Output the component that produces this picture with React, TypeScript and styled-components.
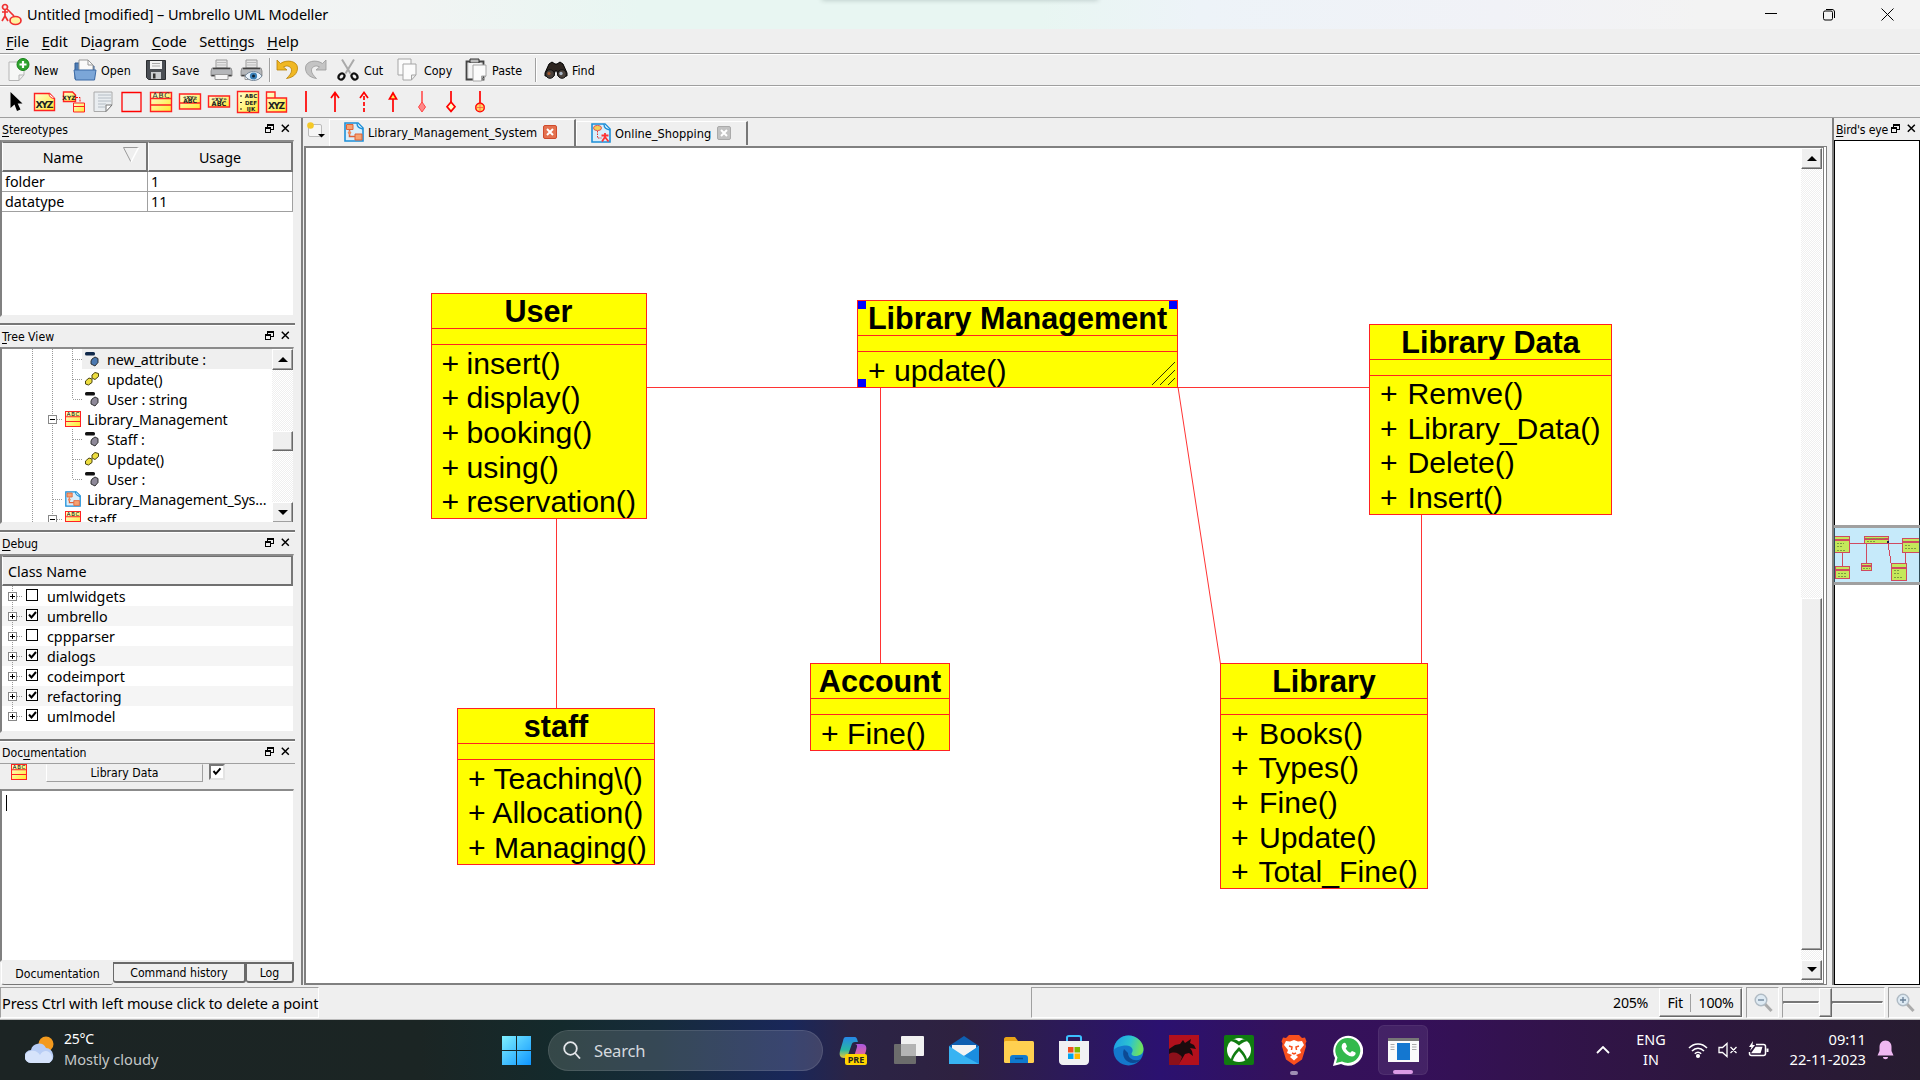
import React from "react";
import styled, { createGlobalStyle, css } from "styled-components";

const ui = `"Noto Sans", "Open Sans", sans-serif`;
const small = `"DejaVu Sans Condensed", "Noto Sans", sans-serif`;

const Global = createGlobalStyle`
  * { box-sizing: border-box; }
  html, body { margin: 0; padding: 0; overflow: hidden; background: #efefef; }
  svg { display: block; flex: none; }
  u { text-decoration: underline; text-underline-offset: 2px; text-decoration-thickness: 1px; }
`;

const Screen = styled.div`
  width: 1920px;
  height: 1080px;
  display: flex;
  flex-direction: column;
  background: #efefef;
  color: #000;
  font-family: ${ui};
  font-size: 14.3px;
  white-space: nowrap;
  overflow: hidden;
`;

/* ---------- title, menu, toolbars ---------- */

const TitleBar = styled.header`
  height: 29px;
  flex: none;
  display: flex;
  align-items: center;
  padding-left: 1px;
  background: linear-gradient(90deg, #f3f3f3 0, #f1f4f3 420px, #e8f6f2 640px, #e8f6f2 1040px, #edf3f8 1200px, #f1f2f7 1500px, #f3f3f3 1700px);
  position: relative;
`;
const TitleShade = styled.div`
  position: absolute;
  left: 822px;
  top: -4px;
  width: 276px;
  height: 4px;
  box-shadow: 0 0 5px rgba(0, 40, 30, 0.25);
`;
const TitleText = styled.span`
  margin: 0 0 1px 4px;
  font-size: 14.5px;
  letter-spacing: -0.12px;
  flex: 1;
`;
const WindowButtons = styled.div`
  display: flex;
  gap: 45px;
  align-items: center;
  padding-right: 26px;
`;
const MenuBar = styled.nav`
  height: 24px;
  flex: none;
  display: flex;
  align-items: center;
  gap: 12.5px;
  padding-left: 6px;
  font-size: 14.7px;
  letter-spacing: -0.08px;
`;
const Bar = styled.div`
  height: 32px;
  flex: none;
  display: flex;
  align-items: center;
  border-top: 1px solid #9f9f9f;
  box-shadow: inset 0 1px #fff;
  padding-top: 1px;
`;
const MainBar = styled(Bar)`
  padding-left: 6px;
`;
const Tool = styled.div<{ $w: number }>`
  width: ${(p) => p.$w}px;
  flex: none;
  display: flex;
  align-items: center;
  gap: 4px;
  font: 12.4px ${small};
`;
const ToolSep = styled.i<{ $r: number }>`
  width: 2px;
  height: 24px;
  margin-right: ${(p) => p.$r}px;
  background: #a0a0a0;
  border-right: 1px solid #fff;
`;
const ToolIcons = styled.div`
  display: flex;
  gap: 5px;
  padding: 0 0 1px 4px;
`;

/* ---------- docks ---------- */

const Body = styled.div`
  height: 868px;
  flex: none;
  display: flex;
  border-top: 1px solid #9f9f9f;
`;
const Left = styled.div`
  width: 295px;
  flex: none;
  display: flex;
  flex-direction: column;
`;
const Dock = styled.section<{ $h: number; $line?: boolean }>`
  height: ${(p) => p.$h}px;
  flex: none;
  display: flex;
  flex-direction: column;
  ${(p) => p.$line && css`border-top: 2px solid #777; box-shadow: inset 0 1px #fff;`}
`;
const DockTitle = styled.div`
  height: 22px;
  flex: none;
  display: flex;
  align-items: center;
  padding: 2px 5px 0 2px;
  gap: 7px;
  font: 12.2px ${small};
  span { flex: 1; }
  svg { margin-top: -3px; }
`;
const NarrowTitle = styled(DockTitle)`
  padding-right: 4px;
  span { flex: 0 0 52px; overflow: hidden; margin-right: -4px; letter-spacing: -0.2px; }
`;
const Frame = styled.div<{ $h: number }>`
  height: ${(p) => p.$h}px;
  width: 294px;
  flex: none;
  display: flex;
  flex-direction: column;
  background: #fff;
  border: 2px solid;
  border-color: #8b8b8b #efefef #efefef #808080;
  border-right-width: 1px;
  overflow: hidden;
  position: relative;
`;
const HeadCell = styled.div<{ $left?: boolean }>`
  flex: 1;
  height: 30px;
  display: flex;
  align-items: center;
  justify-content: ${(p) => (p.$left ? "flex-start" : "center")};
  padding-top: 1px;
  padding-left: ${(p) => (p.$left ? 5 : 0)}px;
  background: #efefef;
  border: 1px solid;
  border-color: #707070 #777 #707070 #fff;
  border-bottom-width: 2px;
  border-right-width: 2px;
`;
const SortHead = styled(HeadCell)`
  flex: 0 0 146px;
  justify-content: flex-end;
  gap: 40px;
  padding-right: 7px;
  svg { margin-top: -5px; }
`;
const Row = styled.div`
  display: flex;
`;
const Cell = styled.div`
  flex: 1;
  height: 20px;
  line-height: 19px;
  padding-left: 3px;
  border: solid #a0a0a0;
  border-width: 0 1px 1px 0;
  &:last-child { flex: 0 0 145px; }
`;
const TreeBody = styled.div`
  display: flex;
  flex: 1;
`;
const TreeRows = styled.div`
  flex: 1;
  overflow: hidden;
`;
const TreeRow = styled.div<{ $sel?: boolean; $deep?: boolean }>`
  height: 20px;
  display: flex;
  align-items: center;
  letter-spacing: ${(p) => (p.$deep ? -0.1 : -0.15)}px;
  > div {
    display: flex;
    align-items: center;
    height: 20px;
    flex: 1;
    background: ${(p) => (p.$sel ? "#efefef" : "none")};
    gap: ${(p) => (p.$deep ? 7 : 6)}px;
    padding-left: ${(p) => (p.$deep ? 2 : 1)}px;
  }
`;
const DebugRow = styled.div<{ $alt?: boolean }>`
  height: 20px;
  display: flex;
  align-items: center;
  gap: 9px;
  background: ${(p) => (p.$alt ? "#f5f5f5" : "#fff")};
`;
const Scroll = styled.div`
  width: 21px;
  flex: none;
  display: flex;
  flex-direction: column;
  background: repeating-conic-gradient(#fff 0 25%, #efefef 0 50%) 0 0 / 2px 2px;
`;
const ScrollPart = styled.div<{ $h: number; $mt?: number }>`
  height: ${(p) => p.$h}px;
  flex: none;
  margin-top: ${(p) => p.$mt || 0}px;
  display: grid;
  place-items: center;
  background: #efefef;
  border: 1px solid;
  border-color: #fff #696969 #696969 #fff;
  box-shadow: inset -1px -1px #a0a0a0;
`;
const DocHead = styled.div`
  height: 26px;
  flex: none;
  display: flex;
  align-items: flex-start;
  border-top: 1px solid #a0a0a0;
  padding-left: 11px;
`;
const DocName = styled.div`
  width: 157px;
  height: 18px;
  margin: 0 6px 0 19px;
  text-align: center;
  font: 12.2px/17px ${small};
  border: 1px solid;
  border-color: #efefef #a0a0a0 #a0a0a0 #fff;
`;
const DocCheck = styled.div`
  width: 16px;
  height: 16px;
  background: #fff;
  border: 2px solid;
  border-color: #777 #e3e3e3 #e3e3e3 #777;
`;
const Caret = styled.i`
  width: 1px;
  height: 16px;
  margin: 4px;
  background: #000;
`;
const Tabs = styled.div`
  display: flex;
  align-items: flex-start;
  padding-left: 1px;
  font: 12.2px ${small};
`;
const BottomTab = styled.div<{ $w: number; $on?: boolean }>`
  width: ${(p) => p.$w}px;
  height: ${(p) => (p.$on ? 23 : 21)}px;
  display: grid;
  place-items: center;
  border: 1px solid;
  border-color: ${(p) => (p.$on ? "#efefef #777 #777 #fff" : "#696969")};
  border-width: ${(p) => (p.$on ? "1px 0 1px 1px" : "2px 2px 2px 1px")};
  border-radius: 0 0 3px 3px;
`;

/* ---------- centre ---------- */

const Gutter = styled.div<{ $w: number }>`
  width: ${(p) => p.$w}px;
  flex: none;
`;
const Center = styled.main`
  width: 1526px;
  flex: none;
  display: flex;
  flex-direction: column;
  border-left: 2px solid #808080;
`;
const TabStrip = styled.div`
  height: 28px;
  flex: none;
  display: flex;
  align-items: flex-end;
  padding-left: 3px;
  font: 12.7px ${small};
`;
const NewTab = styled.div`
  width: 23px;
  height: 25px;
`;
const Tab = styled.div<{ $w: number; $on?: boolean }>`
  width: ${(p) => p.$w}px;
  height: ${(p) => (p.$on ? 27 : 24)}px;
  margin-bottom: ${(p) => (p.$on ? 0 : 1)}px;
  padding-bottom: ${(p) => (p.$on ? 2 : 1)}px;
  display: flex;
  align-items: center;
  padding-left: 14px;
  gap: 4px;
  border: solid #fff;
  border-width: 1px 0 0 1px;
  border-right: 2px solid #777;
  > span { width: ${(p) => (p.$on ? 171 : 98)}px; }
`;
const TabClose = styled.div<{ $on?: boolean }>`
  width: 14px;
  height: 14px;
  border-radius: 2px;
  display: grid;
  place-items: center;
  background: ${(p) => (p.$on ? "#e4714f" : "#c2c2c2")};
  border: 1px solid ${(p) => (p.$on ? "#cf4a2c" : "#aaa")};
`;
const CanvasFrame = styled.div`
  flex: 1;
  margin-left: 1px;
  display: flex;
  border: 2px solid #808080;
  border-right: 4px double #808080;
  padding-right: 1px;
  background: #fff;
`;
const Canvas = styled.div`
  flex: 1;
  position: relative;
`;
const Links = styled.svg`
  position: absolute;
  left: 0;
  top: 0;
`;
const ClassBox = styled.div<{ $x: number; $y: number; $w: number }>`
  position: absolute;
  left: ${(p) => p.$x - 306}px;
  top: ${(p) => p.$y - 148}px;
  width: ${(p) => p.$w}px;
  background: #ff0;
  border: 1px solid #f22;
  font: 30.2px/34.7px "Liberation Sans", Arial, sans-serif;
`;
const ClassName = styled.div`
  height: 35px;
  border-bottom: 1px solid #f22;
  text-align: center;
  font-weight: 700;
  font-size: 30.6px;
  line-height: 34px;
`;
const Attrs = styled.div`
  height: 16px;
  border-bottom: 1px solid #f22;
`;
const Op = styled.div<{ $gap: number }>`
  padding-left: 10px;
  height: 34.7px;
  padding-top: 1.5px;
  word-spacing: ${(p) => p.$gap}px;
`;
const Handle = styled.i<{ $r?: boolean; $b?: boolean }>`
  position: absolute;
  width: 8px;
  height: 8px;
  background: #00f;
  ${(p) => (p.$r ? "right: 0;" : "left: 0;")}
  ${(p) => (p.$b ? "bottom: 0;" : "top: 0;")}
`;
const Grip = styled.svg`
  position: absolute;
  right: 1px;
  bottom: 1px;
`;
const Right = styled.aside`
  flex: 1;
  border-left: 2px solid #808080;
  display: flex;
  flex-direction: column;
  overflow: hidden;
`;
const BirdFrame = styled.div`
  flex: 1;
  background: #fff;
  border: 1px solid #000;
  display: flex;
  flex-direction: column;
  padding-top: 384px;
`;
const BirdView = styled.div`
  border: solid #a0a0a0;
  border-width: 3px 0;
  margin: 0 -1px;
  background: #c6eafa;
`;

/* ---------- status bar ---------- */

const Status = styled.footer`
  height: 35px;
  flex: none;
  display: flex;
  align-items: flex-end;
  padding-bottom: 1px;
  border-bottom: 1px solid #bbb;
`;
const StatusCell = styled.div<{ $w: number; $mr: number; $pad?: number }>`
  width: ${(p) => p.$w}px;
  margin-right: ${(p) => p.$mr}px;
  padding-left: ${(p) => p.$pad || 0}px;
  height: 31px;
  flex: none;
  display: flex;
  align-items: center;
  border: 1px solid;
  border-color: #a0a0a0 #fff #fff #a0a0a0;
`;
const StatusText = styled.span`
  padding-left: 1px;
  font-size: 14.5px;
  letter-spacing: -0.11px;
`;
const Zoom = styled.span`
  margin-left: auto;
  margin-right: 11px;
  font-size: 14.2px;
  letter-spacing: -0.3px;
`;
const FitBox = styled.div`
  width: 83px;
  height: 29px;
  display: flex;
  align-items: center;
  justify-content: space-evenly;
  font-size: 14.2px;
  letter-spacing: -0.3px;
  border: 1px solid;
  border-color: #fff #696969 #696969 #fff;
  box-shadow: inset -1px -1px #a0a0a0;
  i { width: 1px; height: 18px; background: #a0a0a0; }
`;
const Groove = styled.i<{ $w: number }>`
  width: ${(p) => p.$w}px;
  height: 3px;
  border: 1px solid;
  border-color: #777 #fff #fff #777;
  border-top-width: 2px;
`;
const Knob = styled.i`
  width: 13px;
  height: 29px;
  background: #efefef;
  border: 1px solid;
  border-color: #fff #696969 #696969 #fff;
  box-shadow: inset -1px -1px #a0a0a0;
`;

/* ---------- taskbar ---------- */

const Taskbar = styled.div`
  height: 60px;
  flex: none;
  display: flex;
  align-items: center;
  color: #fff;
  font-size: 14px;
  background: linear-gradient(90deg, #1c2424 0, #1b2524 420px, #142a2c 560px, #162b3b 660px, #19275a 790px, #2b2446 850px, #2e2140 960px, #2c1a58 1060px, #2b1170 1160px, #34125a 1290px, #35105a 1410px, #32134b 1550px, #2c173c 1720px, #271c30 1920px);
`;
const Weather = styled.div`
  width: 502px;
  display: flex;
  align-items: center;
  gap: 9px;
  padding-left: 25px;
`;
const WeatherText = styled.div`
  line-height: 20px;
  margin-top: -2px;
  letter-spacing: -0.25px;
  span { display: block; color: #c4c8c8; font-size: 14.6px; letter-spacing: 0; }
`;
const SearchPill = styled.div`
  width: 275px;
  height: 41px;
  margin: 0 16px 0 17px;
  border-radius: 21px;
  display: flex;
  align-items: center;
  gap: 13px;
  padding-left: 14px;
  color: #d5d9de;
  font-size: 16.6px;
  letter-spacing: -0.2px;
  background: rgba(255, 255, 255, 0.14);
  border: 1px solid rgba(255, 255, 255, 0.1);
`;
const Apps = styled.div`
  display: flex;
  gap: 24.95px;
  align-items: center;
`;
const AppButton = styled.div<{ $on?: boolean; $dot?: boolean }>`
  width: 30px;
  height: 60px;
  display: flex;
  align-items: center;
  justify-content: center;
  position: relative;
  ${(p) =>
    p.$on &&
    css`
      width: 50px;
      height: 50px;
      margin-left: -10px;
      border-radius: 6px;
      background: rgba(255, 255, 255, 0.08);
      border: 1px solid rgba(255, 255, 255, 0.06);
    `}
  &::after {
    content: "";
    display: ${(p) => (p.$on || p.$dot ? "block" : "none")};
    position: absolute;
    bottom: ${(p) => (p.$on ? 0 : 5)}px;
    width: ${(p) => (p.$on ? 20 : 8)}px;
    height: 4px;
    border-radius: 2px;
    background: ${(p) => (p.$on ? "#dc9be6" : "#a08fb4")};
  }
`;
const Tray = styled.div`
  margin-left: auto;
  display: flex;
  align-items: center;
  padding-right: 26px;
`;
const Lang = styled.div`
  width: 32px;
  margin: 0 21px 0 25px;
  text-align: center;
  line-height: 20px;
  font-size: 14.4px;
`;
const TrayIcons = styled.div`
  display: flex;
  gap: 10px;
`;
const Clock = styled.div`
  width: 97px;
  margin: -2px 11px 0 0;
  text-align: right;
  line-height: 20px;
  font-size: 14.7px;
  letter-spacing: -0.02px;
`;

/* ---------- drawings ---------- */

const DockButtons = () => (
  <>
    <svg width="9" height="9" viewBox="0 0 9 9" fill="none" stroke="#000" shapeRendering="crispEdges">
      <path d="M2.5 3V.5h6v5H6M2 1h7" />
      <path d="M.5 3.5h5v5h-5zM0 4h6" />
    </svg>
    <svg width="9" height="9" viewBox="0 0 9 9" stroke="#000" strokeWidth="1.5">
      <path d="M.8 .8l7 7M7.800 .8l-7 7" />
    </svg>
  </>
);
const Tri = ({ down }: { down?: boolean }) => (
  <svg width="10" height="6" viewBox="0 0 10 6">
    <path d={down ? "M0 0h10L5 5z" : "M0 5h10L5 0z"} />
  </svg>
);
const Check = () => (
  <svg width="12" height="12" viewBox="0 0 12 12" fill="none" stroke="#000" strokeWidth="2">
    <path d="M2.500 5l2.300 2.800L9.500 2.300" />
  </svg>
);
const ClassIcon = ({ s = 16 }: { s?: number }) => (
  <svg width={s} height={s} viewBox="0 0 22 22">
    <defs>
      <linearGradient id="yel" x1="0" y1="0" x2="1" y2="1">
        <stop offset="0" stopColor="#ffffd8" />
        <stop offset="1" stopColor="#ffea2e" />
      </linearGradient>
    </defs>
    <path d="M.7.700h20.600v20.600H.7zM.7 8h20.600M.7 14.500h20.600" fill="url(#yel)" stroke="#f22" strokeWidth="1.400" />
    <text x="11" y="7" fontSize="7.500" fontWeight="400" textAnchor="middle" textLength="17" fontFamily="DejaVu Sans">ABC</text>
  </svg>
);
const DiagramIcon = ({ s = 16, use }: { s?: number; use?: boolean }) => (
  <svg width={s} height={s} viewBox="0 0 20 20">
    <path d="M1 1h13l5 5v13H1z" fill="#d9eefb" stroke="#1d8fd8" strokeWidth="1.600" />
    <path d="M13 1c0 4 2 5 6 6" fill="#fff" stroke="#1d8fd8" strokeWidth="1.400" />
    {use ? (
      <>
        <ellipse cx="6.500" cy="5" rx="4" ry="2.600" fill="#f2d05a" stroke="#d55" />
        <path d="M6.500 8v7h4" fill="none" stroke="#d33" strokeDasharray="1.500 1" />
        <path d="M14 10v5M10.500 12.500h7M14 14l-3 4.500M14 14l3.500 4.500" stroke="#f33" strokeWidth="1.800" />
      </>
    ) : (
      <>
        <path d="M2.500 2.500h6.500v5H2.500zM11 12h7v6h-7z" fill="#f7a271" stroke="#dd6238" />
        <path d="M5.500 8v6.500H11" fill="none" stroke="#dd6238" strokeWidth="1.500" />
        <path d="M5.500 8.500l2 2.300-2 2.300-2-2.300z" fill="#f08a5c" />
      </>
    )}
  </svg>
);
const AttrIcon = ({ c = "#8d8898" }: { c?: string }) => (
  <svg width="16" height="18" viewBox="0 0 16 18">
    <rect x="1" y="2" width="10" height="3.600" rx="1.500" fill={c === "#8d8898" ? "#111" : "#10294a"} />
    <path d="M8 9l3-2 3 1.500v4L11 16l-4-2v-3z" fill={c} stroke="#222" strokeWidth=".9" />
  </svg>
);
const OpIcon = () => (
  <svg width="16" height="16" viewBox="0 0 16 16" fill="#eede40" stroke="#4a4510" strokeWidth="1">
    <path d="M8 4l3-2.500 3.500 1v3L11 8.500 8 7zM1.500 10L5 7l3 1v3.500L4.500 14l-3-1z" />
  </svg>
);

type TreeItem = { t: string; k: "a" | "o" | "c" | "d"; sel?: boolean };
const tree: TreeItem[] = [
  { t: "new_attribute :", k: "a", sel: true },
  { t: "update()", k: "o" },
  { t: "User : string", k: "a" },
  { t: "Library_Management", k: "c" },
  { t: "Staff :", k: "a" },
  { t: "Update()", k: "o" },
  { t: "User :", k: "a" },
  { t: "Library_Management_Sys...", k: "d" },
  { t: "staff", k: "c" },
];
const Branch = ({ deep, last, box }: { deep: boolean; last?: boolean; box?: boolean }) => (
  <svg width={deep ? 80 : 62} height="20" fill="none" stroke="#999" strokeDasharray="1 1" shapeRendering="crispEdges">
    <path d={deep ? `M30.500 0v20M50.500 0v20M70.500 0v${last ? 10 : 20}M71 10.500h9` : "M30.500 0v20M50.500 0v20M51 10.500h9"} />
    {box && (
      <g strokeDasharray="none">
        <path d="M46.500 6.500h8v8h-8z" fill="#fff" stroke="#888" />
        <path d="M48 10.500h5" stroke="#000" />
      </g>
    )}
  </svg>
);

const debug: [string, boolean][] = [
  ["umlwidgets", false],
  ["umbrello", true],
  ["cppparser", false],
  ["dialogs", true],
  ["codeimport", true],
  ["refactoring", true],
  ["umlmodel", true],
];

const red = { fill: "none", stroke: "#f00", strokeWidth: 1.7 };
const lbl = { fontFamily: "DejaVu Sans", fontWeight: 700, fill: "#222" } as const;
const Ico = ({ children }: { children: React.ReactNode }) => (
  <svg width="24" height="24" viewBox="0 0 24 24">
    {children}
  </svg>
);
const yellow = { fill: "url(#yel)", stroke: "#f22", strokeWidth: 1.4 };

const UmlTools = () => (
  <ToolIcons>
    <Ico><path d="M6.500 2v16l4-3.500L13 21l3.500-1.500-2.800-6h4.800z" fill="#000" /></Ico>
    <Ico><path d="M1.500 3.500h15l5 5v12h-20z" {...yellow} /><path d="M16 3.500c0 3 2 5 5.500 5" fill="#fff" stroke="#f22" /><text x="11.500" y="17.500" fontSize="9.500" textAnchor="middle" textLength="18" {...lbl}>XYZ</text></Ico>
    <Ico><path d="M1.500 2h9l3 3v6.500h-12z" {...yellow} /><text x="7" y="10" fontSize="6" textAnchor="middle" {...lbl}>XYZ</text><path d="M14 7.500h4v5" stroke="#f00" fill="none" strokeDasharray="2 1" /><path d="M11.500 13h11v9h-11zM11.500 16.500h11" {...yellow} strokeWidth={1} /></Ico>
    <Ico><path d="M3 2h18v13l-6 6.500H3z" fill="#e9edf0" stroke="#aaa" /><path d="M7 5h13M7 8h13M7 11h13M7 14h8M7 17h7" stroke="#b4bcc4" /><path d="M21 15h-6v6.500z" fill="#fff" stroke="#777" /></Ico>
    <Ico><path d="M2 2.500h19v19H2z" {...red} strokeWidth={1.3} /></Ico>
    <Ico><path d="M1.500 2.500h21v19h-21zM1.500 8.500h21M1.500 15h21" {...yellow} /><text x="12" y="8" fontSize="7.500" textAnchor="middle" textLength="17" {...lbl} fontWeight={400}>ABC</text></Ico>
    <Ico><path d="M1.500 4h21v15h-21zM1.500 13h21" {...yellow} /><text x="12" y="8.500" fontSize="5.500" textAnchor="middle" {...lbl}>«xy»</text><text x="12" y="12.500" fontSize="6" textAnchor="middle" {...lbl}>ABC</text></Ico>
    <Ico><path d="M1.500 6h21v11h-21z" {...yellow} /><text x="12" y="11" fontSize="6" textAnchor="middle" {...lbl}>«xy»</text><text x="12" y="16" fontSize="6.500" textAnchor="middle" {...lbl}>ABC</text></Ico>
    <Ico><path d="M1.500 1.500h21v21h-21z" {...yellow} /><text x="15" y="8" fontSize="5.500" textAnchor="middle" {...lbl}>ABC</text><text x="15" y="14.500" fontSize="5.500" textAnchor="middle" {...lbl}>DEF</text><text x="15" y="21" fontSize="5.500" textAnchor="middle" {...lbl}>IJK</text><path d="M4 6h2M4 12.500h2M4 19h2" stroke="#222" /></Ico>
    <Ico><path d="M1.500 8V2h8.500v6M1.500 8h20v14h-20z" {...yellow} /><text x="11.500" y="19" fontSize="9" textAnchor="middle" textLength="17" {...lbl}>XYZ</text></Ico>
    <Ico><path d="M12 1v21" {...red} /></Ico>
    <Ico><path d="M12 22V3M8 8l4-5.500L16 8" {...red} /></Ico>
    <Ico><path d="M12 22V3" {...red} strokeDasharray="4 2" /><path d="M8 8l4-5.500L16 8" {...red} /></Ico>
    <Ico><path d="M12 22V9" {...red} /><path d="M8.500 9L12 3l3.500 6z" {...red} fill="#ffef60" /></Ico>
    <Ico><path d="M12 1v12" {...red} stroke="#f55" /><path d="M12 12l3.500 5-3.500 5-3.500-5z" fill="#f88" stroke="#f44" /></Ico>
    <Ico><path d="M12 1v11" {...red} /><path d="M12 12l4 4.700-4 4.700-4-4.700z" {...red} fill="#ffc" /></Ico>
    <Ico><path d="M12 1v12" {...red} /><circle cx="12" cy="17.500" r="4.300" {...red} fill="#ffd860" strokeWidth={1.4} /><path d="M12 13v9M7.500 17.500h9" stroke="#f54" strokeWidth=".8" /></Ico>
  </ToolIcons>
);

const Printer = ({ eye }: { eye?: boolean }) => (
  <Ico>
    <path d="M7 2h11v8H7z" fill="#e6e6e6" stroke="#999" />
    <path d="M8 4.500h9M8 7h9" stroke="#bbb" />
    <path d="M3 10h19l1 3v5H2v-5z" fill="#b4b6b9" stroke="#777" strokeWidth=".7" />
    <path d="M4 10.500h17M2.500 17.500h20" stroke="#444" strokeWidth="1.500" />
    <path d="M6 16.500h13v5H6z" fill="#f6f6f6" stroke="#999" />
    {eye && (<><path d="M6 18c4-6 13-6 17 0-4 6-13 6-17 0z" fill="#e9f2fa" stroke="#789" /><circle cx="14.500" cy="18" r="3.600" fill="#3a80b8" /><circle cx="14.500" cy="18" r="1.500" fill="#123" /></>)}
  </Ico>
);
const Page = ({ x = 0, y = 0 }: { x?: number; y?: number }) => (
  <path transform={`translate(${x} ${y})`} d="M1 1h13v11l-4.500 5H1zM14 12H9.500v5" fill="#fbfbfb" stroke="#a5a5a5" />
);

const MainTools = () => (
  <>
    <Tool $w={67}><Ico><path d="M3 4h15v13l-5 5.500H3zM18 17h-5v5.500" fill="#f6f7f6" stroke="#b5b5b5" /><circle cx="17" cy="6.500" r="6" fill="#2ea32e" stroke="#178317" /><path d="M17 3v7M13.500 6.500h7" stroke="#fff" strokeWidth="2.200" /></Ico><span>New</span></Tool>
    <Tool $w={71}><Ico><path d="M2 5h6l2 3h11v13H2z" fill="#4d7cb5" stroke="#2e5a92" /><path d="M6 2h9l5 5v8H6z" fill="#fafafa" stroke="#999" /><path d="M15 2v5h5" fill="none" stroke="#999" /><path d="M1 12h22l-1.500 10h-19z" fill="#7ba6d8" stroke="#3d6ba6" /></Ico><span>Open</span></Tool>
    <Tool $w={65}><Ico><path d="M2.500 2.500h19v19h-17l-2-2z" fill="#4a4e54" stroke="#2b2d30" /><path d="M6 3h12v8H6z" fill="#f3f3f3" /><path d="M8 5.500h8M8 8h8" stroke="#aaa" /><path d="M7 14h10v7H7z" fill="#c9ccd0" /><path d="M9 15.500h2.500v5H9z" fill="#333" /></Ico><span>Save</span></Tool>
    <Tool $w={30}><Printer /></Tool>
    <Tool $w={30}><Printer eye /></Tool>
    <ToolSep $r={4} />
    <Tool $w={29}><Ico><path d="M2 2v10h10L8.500 9c4-2.500 8.500 0 8 4-.3 2.500-2 4.500-5 7.500 7-1 11-5 11-10.500C22.500 3 12 1 5.500 5.500z" fill="#f0b824" stroke="#b98208" strokeWidth=".8" /></Ico></Tool>
    <Tool $w={32}><Ico><path d="M22 2v10H12l3.500-3c-4-2.500-8.500 0-8 4 .3 2.500 2 4.500 5 7.500-7-1-11-5-11-10.500C1.500 3 12 1 18.500 5.500z" fill="#c4c4c4" stroke="#999" strokeWidth=".8" /></Ico></Tool>
    <Tool $w={60}><Ico><path d="M6 1.500l8.500 14M18 1.500l-8.500 14" stroke="#aaa" strokeWidth="2" /><ellipse cx="5.500" cy="18.500" rx="2.600" ry="3.300" fill="none" stroke="#111" strokeWidth="2.200" transform="rotate(40 5.500 18.500)" /><ellipse cx="18.500" cy="18.500" rx="2.600" ry="3.300" fill="none" stroke="#111" strokeWidth="2.200" transform="rotate(-40 18.500 18.500)" /></Ico><span>Cut</span></Tool>
    <Tool $w={68}><Ico><Page x={1} /><Page x={6} y={5} /></Ico><span>Copy</span></Tool>
    <Tool $w={71}><Ico><path d="M2.500 3.500h17v18h-17z" fill="#e4e4e4" stroke="#444" strokeWidth="1.800" /><path d="M6 1h9v4H6z" fill="#bbb" stroke="#333" /><path d="M5 5h12v15H5z" fill="#f4f4f4" /><Page x={8} y={6} /></Ico><span>Paste</span></Tool>
    <ToolSep $r={7} />
    <Tool $w={60}><Ico><path d="M8 4l3 2h2l3-2 3 2 4 9v3h-9l-1-5h-2l-1 5H1v-3l4-9z" fill="#2d2520" stroke="#000" /><circle cx="6" cy="16" r="4.300" fill="#4a423c" stroke="#111" /><circle cx="18" cy="16" r="4.300" fill="#4a423c" stroke="#111" /><circle cx="17" cy="15.500" r="1.700" fill="#a8b6c4" /><circle cx="5" cy="15.500" r="1.500" fill="#a65a30" /></Ico><span>Find</span></Tool>
  </>
);

const MagIcon = ({ plus }: { plus?: boolean }) => (
  <svg width="20" height="20" viewBox="0 0 20 20" opacity=".65">
    <path d="M11 11l6.500 7" stroke="#888" strokeWidth="3" />
    <circle cx="7" cy="7" r="5.800" fill="#d5e8f6" stroke="#8fa0ae" strokeWidth="1.400" />
    <path d={plus ? "M4 7h6M7 4v6" : "M4 7h6"} stroke="#246" strokeWidth="1.300" />
  </svg>
);

/* ---------- diagram data ---------- */

const boxes = [
  { n: "User", x: 430.5, y: 293, w: 216, gap: -1, ops: ["insert()", "display()", "booking()", "using()", "reservation()"] },
  { n: "Library Management", x: 857, y: 300, w: 321, gap: 0, ops: ["update()"], sel: true },
  { n: "Library Data", x: 1369, y: 323.5, w: 243, gap: 1.5, ops: ["Remve()", "Library_Data()", "Delete()", "Insert()"] },
  { n: "Account", x: 810, y: 663, w: 140, gap: 0, ops: ["Fine()"] },
  { n: "Library", x: 1220, y: 663, w: 208, gap: 2, ops: ["Books()", "Types()", "Fine()", "Update()", "Total_Fine()"] },
  { n: "staff", x: 457, y: 708, w: 198, gap: 0, ops: ["Teaching\\()", "Allocation()", "Managing()"] },
];

const MiniMap = () => (
  <svg width="86" height="54" viewBox="0 0 86 54" fill="#c4e85a" stroke="#cf4a60" shapeRendering="crispEdges">
    <path d="M14 15.500h54M8.500 24v16M32.500 15v22M71.500 24v13M54 15l3 20" fill="none" />
    <path d="M-1 8.500h16.500v16H-1zM30.500 8.500h24v7h-24zM68.500 10.500H88v14H68.500zM27.500 35.500h10v7h-10zM57.500 35.500h15v17h-15zM1.500 38.500h14v12h-14z" />
    <path d="M0 11.500h15M31 11h24M69 13.500h18M28 38h10M58 39.500h14M2 41.500h13" strokeWidth="2" />
    <path d="M3 15.500h7M3 18.500h6M3 22.500h9M33 13.500h8M71 17.500h6M71 20.500h12M29 40.500h7M60 42.500h6M60 45.500h5M60 49.500h9M4 45.500h8M4 48.500h8M33 10h18" stroke="#7c9c40" strokeDasharray="2 1" fill="none" />
    <path d="M52.500 14h2" stroke="#124" strokeWidth="2" />
    <path d="M.5 0v54M85.500 0v54" stroke="#2c4a58" />
  </svg>
);

const AppIcons = () => (
  <Apps>
    <AppButton><svg width="30" height="30" viewBox="0 0 30 30"><defs><linearGradient id="cp" x1="0" y1="0" x2="0" y2="1"><stop offset="0" stopColor="#2787e8" /><stop offset=".6" stopColor="#27b6a5" /><stop offset="1" stopColor="#e9c83a" /></linearGradient><linearGradient id="cp2" x1="0" y1="0" x2="0" y2="1"><stop offset="0" stopColor="#a958e0" /><stop offset="1" stopColor="#ff6b7c" /></linearGradient></defs><path d="M7 2h8c3 0 3 2 4 5h-3c-2 0-3 1-3.500 3L9 20c-.6 2-2 3-4 3-4 0-5-3-4-7L4 6c.6-2.500 1-4 3-4z" fill="url(#cp)" /><path d="M18 9h5c4 0 5 3 4 7l-2 6c-1 2-2 3-4 3h-7l4-13c.4-2-.5-3-2-3z" fill="url(#cp2)" /><rect x="6" y="19" width="22" height="11" rx="2" fill="#ffd400" /><text x="17" y="28" fontSize="9" fontWeight="700" textAnchor="middle" fontFamily="Noto Sans" fill="#222">PRE</text></svg></AppButton>
    <AppButton><svg width="30" height="30" viewBox="0 0 30 30"><rect x="0" y="9" width="22" height="20" rx="1" fill="#6c6c6c" /><rect x="7" y="1" width="23" height="20" rx="1" fill="#f1f1f1" /><path d="M7 9h15v12H7z" fill="#b4b4b4" /></svg></AppButton>
    <AppButton><svg width="32" height="30" viewBox="0 0 32 30"><path d="M1 11L16 1l15 10v6H1z" fill="#0f5fb0" /><path d="M4 10h24v12H4z" fill="#f3f3f3" /><path d="M1 11l15 10 15-10v18H1z" fill="#38b3f2" /><path d="M31 11v18L14 19.700l2 1.300z" fill="#1a8de0" /></svg></AppButton>
    <AppButton><svg width="32" height="28" viewBox="0 0 32 28"><path d="M1 3c0-1 1-2 2-2h9l3 4h14v8H1z" fill="#e8a317" /><rect x="1" y="5" width="30" height="22" rx="1.500" fill="#ffd050" /><path d="M7 27v-5c0-2 1-3 3-3h12c2 0 3 1 3 3v5z" fill="#0f7ad0" /><path d="M12 22.500h8" stroke="#0a4f90" strokeWidth="1.500" /></svg></AppButton>
    <AppButton><svg width="30" height="30" viewBox="0 0 30 30"><path d="M8 8V2.500C8 1.500 9 1 10 1h10c1 0 2 .5 2 1.500V8" fill="none" stroke="#3cc0ff" strokeWidth="2" /><path d="M0 6h30v20c0 2-1.500 4-4 4H4c-2.500 0-4-2-4-4z" fill="#f0f1f3" /><path d="M9 12h5.500v5.500H9z" fill="#f25022" /><path d="M15.500 12H21v5.500h-5.500z" fill="#7fba00" /><path d="M9 18.500h5.500V24H9z" fill="#00a4ef" /><path d="M15.500 18.500H21V24h-5.500z" fill="#ffb900" /></svg></AppButton>
    <AppButton><svg width="31" height="31" viewBox="0 0 31 31"><defs><linearGradient id="eg" x1="0" y1="0" x2="1" y2=".2"><stop offset="0" stopColor="#1c9be8" /><stop offset=".6" stopColor="#2cc4d0" /><stop offset="1" stopColor="#6ee060" /></linearGradient></defs><circle cx="15.500" cy="15.500" r="15" fill="#1478cc" /><path d="M1 15C1 6 8 .5 15.500.5 24 .5 30.500 7 30.500 14c0 5-4 7-8 7-3 0-5-1.500-3.500-3.500 2-3-.5-7-5.500-7C7 10.500 1.500 13 1 15z" fill="url(#eg)" /><path d="M11 14c-3 7 2 14 9 14 3 0 6-1.500 8-4-6 3-13 0-13-6z" fill="#0c4a94" /></svg></AppButton>
    <AppButton><svg width="30" height="30" viewBox="0 0 30 30"><path d="M0 0h30v30H0z" fill="#b3101c" /><path d="M0 14l6-4 5-1 3-4 2 3 6-4-1 4 4 2 2 4-6-1 2 3 1 5-4-3-4 1-3 5-4 6H0z" fill="#1a0b0d" /><path d="M0 19c5-3 10-1 13 3l-3 8H0z" fill="#8c101a" /></svg></AppButton>
    <AppButton><svg width="30" height="30" viewBox="0 0 30 30"><rect width="30" height="30" rx="2" fill="#107c10" /><circle cx="15" cy="15" r="12" fill="#fff" /><path d="M8 4.500c3-1 5 .5 7 2 2-1.500 4-3 7-2l2 2c-3-1-6 2-9 4-3-2-6-5-9-4zM15 12c4 4 8 9 8 13h-2c-1-3-3-6-6-9-3 3-5 6-6 9H7c0-4 4-9 8-13z" fill="#107c10" /></svg></AppButton>
    <AppButton $dot><svg width="26" height="30" viewBox="0 0 26 30"><path d="M8 0h10l3 3 3-.5 1.500 4-1 2 .5 3-4 13L13 30 5 24.500 1 11.500l.5-3-1-2L2 2.500 5 3z" fill="#f8501e" /><path d="M5 6l4 .5L13 5l4 1.500L21 6l2 4-4 5 1 3-5 2 2 2-4 3.500L9 22l2-2-5-2 1-3-4-5z" fill="#fff" /><path d="M8 11l3 1-.5 3M18 11l-3 1 .5 3M11 18l2 1 2-1" fill="none" stroke="#f8501e" strokeWidth="1.500" /></svg></AppButton>
    <AppButton><svg width="30" height="31" viewBox="0 0 30 31"><path d="M0 31l2-8A15 15 0 1 1 8 29z" fill="#fff" /><path d="M3 28l1.500-5.500A12.500 12.500 0 1 1 9 26.500z" fill="#33b94c" /><path d="M10 8.500c1-1 2.500-.8 3 .5l1 2.500-1.300 2c1 2 2.500 3.300 4.500 4.200l1.800-1.700 3 1.300c1 .6.800 2-.2 3-2 2-5 1.200-8-.8-2.500-1.800-4.300-4-5-6.500-.3-2 0-3.500 1.200-4.500z" fill="#fff" /></svg></AppButton>
    <AppButton $on><svg width="31" height="24" viewBox="0 0 31 24"><path d="M0 0h31v24H0z" fill="#fafafa" /><path d="M0 0h31v3H0z" fill="#777" /><path d="M9 5h13v17H9z" fill="#1477d0" /><path d="M2.500 6.500h4M2.500 9h4M2.500 11.500h4M24 6.500h4.500M24 9h4.500M24 11.500h4.500" stroke="#aaa" /></svg></AppButton>
  </Apps>
);

const CloseCross = () => (
  <svg width="8" height="8" viewBox="0 0 8 8" stroke="#fff" strokeWidth="2">
    <path d="M1 1l6 6M7 1L1 7" />
  </svg>
);

export default function App() {
  return (
    <Screen>
      <Global />
      <TitleBar>
        <TitleShade />
        <svg width="22" height="24" viewBox="0 0 22 24" fill="none" stroke="#f03030" strokeWidth="1.700">
          <circle cx="4" cy="4" r="2.500" />
          <path d="M4 7v6M1 9h6M4 13l-3 5M4 13l3 5M6 6l7 7" />
          <ellipse cx="14.500" cy="17.500" rx="5.500" ry="4" fill="#fff3a0" />
        </svg>
        <TitleText>Untitled [modified] – Umbrello UML Modeller</TitleText>
        <WindowButtons>
          <svg width="13" height="13" viewBox="0 0 13 13"><path d="M0 5.500h12" stroke="#000" /></svg>
          <svg width="13" height="13" viewBox="0 0 13 13" fill="none" stroke="#000"><rect x=".5" y="3" width="9" height="9" rx="1.500" /><path d="M3 1.500h6c1.600 0 2.500 1 2.500 2.500v6" /></svg>
          <svg width="13" height="13" viewBox="0 0 13 13" stroke="#000"><path d="M.5.5l12 12M12.500.5l-12 12" /></svg>
        </WindowButtons>
      </TitleBar>
      <MenuBar>
        <span><u>F</u>ile</span>
        <span><u>E</u>dit</span>
        <span>D<u>i</u>agram</span>
        <span><u>C</u>ode</span>
        <span>Setti<u>n</u>gs</span>
        <span><u>H</u>elp</span>
      </MenuBar>
      <MainBar>
        <MainTools />
      </MainBar>
      <Bar>
        <UmlTools />
      </Bar>

      <Body>
        <Left>
          <Dock $h={205}>
            <DockTitle><span><u>S</u>tereotypes</span><DockButtons /></DockTitle>
            <Frame $h={177}>
              <Row>
                <SortHead><span>Name</span><svg width="16" height="16" viewBox="0 0 16 16" fill="none"><path d="M8 15L.5.500h15" stroke="#999" /><path d="M15.500.5L8 15" stroke="#fff" strokeWidth="1.500" /></svg></SortHead>
                <HeadCell>Usage</HeadCell>
              </Row>
              <Row><Cell>folder</Cell><Cell>1</Cell></Row>
              <Row><Cell>datatype</Cell><Cell>11</Cell></Row>
            </Frame>
          </Dock>
          <Dock $h={207} $line>
            <DockTitle><span><u>T</u>ree View</span><DockButtons /></DockTitle>
            <Frame $h={177}>
              <TreeBody>
                <TreeRows>
                  {tree.map((r, i) => {
                    const deep = r.k === "a" || r.k === "o";
                    return (
                      <TreeRow key={i} $sel={r.sel} $deep={deep}>
                        <Branch deep={deep} last={i === 2 || i === 6} box={r.k === "c"} />
                        <div>
                          {r.k === "a" && <AttrIcon c={r.sel ? "#4b78b0" : undefined} />}
                          {r.k === "o" && <OpIcon />}
                          {r.k === "c" && <ClassIcon />}
                          {r.k === "d" && <DiagramIcon />}
                          <span>{r.t}</span>
                        </div>
                      </TreeRow>
                    );
                  })}
                </TreeRows>
                <Scroll>
                  <ScrollPart $h={21}><Tri /></ScrollPart>
                  <ScrollPart $h={20} $mt={61}><span /></ScrollPart>
                  <ScrollPart $h={21} $mt={51}><Tri down /></ScrollPart>
                </Scroll>
              </TreeBody>
            </Frame>
          </Dock>
          <Dock $h={209} $line>
            <DockTitle><span><u>D</u>ebug</span><DockButtons /></DockTitle>
            <Frame $h={179}>
              <Row><HeadCell $left>Class Name</HeadCell></Row>
              {debug.map(([n, on], i) => (
                <DebugRow key={n} $alt={i % 2 === 1}>
                  <svg width="36" height="20" fill="none" shapeRendering="crispEdges">
                    <path d={i === 6 ? "M10.500 0v10M11 10.500h9" : "M10.500 0v20M11 10.500h9"} stroke="#999" strokeDasharray="1 1" />
                    <path d="M6.500 6.500h8v8h-8z" fill="#fff" stroke="#888" />
                    <path d="M8 10.500h5M10.500 8v5" stroke="#000" />
                    <path d="M24.500 3.500h11v11h-11z" fill="#fff" stroke="#000" />
                    {on && <path d="M27 8.500l2.500 3L34 6" stroke="#000" strokeWidth="2" shapeRendering="auto" />}
                  </svg>
                  <span>{n}</span>
                </DebugRow>
              ))}
            </Frame>
          </Dock>
          <Dock $h={246} $line>
            <DockTitle><span>Doc<u>u</u>mentation</span><DockButtons /></DockTitle>
            <DocHead>
              <ClassIcon />
              <DocName>Library Data</DocName>
              <DocCheck><Check /></DocCheck>
            </DocHead>
            <Frame $h={173}><Caret /></Frame>
            <Tabs>
              <BottomTab $w={112} $on>Documentation</BottomTab>
              <BottomTab $w={133}>Command history</BottomTab>
              <BottomTab $w={48}>Log</BottomTab>
            </Tabs>
          </Dock>
        </Left>
        <Gutter $w={6} />
        <Center>
          <TabStrip>
            <NewTab>
              <svg width="20" height="20" viewBox="0 0 20 20">
                <rect x="2.500" y="3.500" width="13" height="12" rx="1.500" fill="#f6f6f6" stroke="#bbb" />
                <circle cx="4.500" cy="4.500" r="3.300" fill="#f5c927" />
                <path d="M12 13h7l-3.500 3.500z" />
              </svg>
            </NewTab>
            <Tab $w={247} $on>
              <DiagramIcon s={20} />
              <span>Library_Management_System</span>
              <TabClose $on><CloseCross /></TabClose>
            </Tab>
            <Tab $w={172}>
              <DiagramIcon s={20} use />
              <span>Online_Shopping</span>
              <TabClose><CloseCross /></TabClose>
            </Tab>
          </TabStrip>
          <CanvasFrame>
            <Canvas>
              <Links width="1495" height="834" viewBox="306 148 1495 834" fill="none" stroke="#f33" strokeWidth="1">
                <path d="M646 387.500h723M880.500 387v277M1178 387l42.500 277M556.500 519v190M1421.500 514v150" />
              </Links>
              {boxes.map((b) => (
                <ClassBox key={b.n} $x={b.x} $y={b.y} $w={b.w}>
                  <ClassName>{b.n}</ClassName>
                  <Attrs />
                  {b.ops.map((o) => (
                    <Op key={o} $gap={b.gap}>+ {o}</Op>
                  ))}
                  {b.sel && (
                    <>
                      <Handle />
                      <Handle $r />
                      <Handle $b />
                      <Grip width="25" height="25" viewBox="0 0 25 25" stroke="#000" strokeWidth=".8"><path d="M1 24L24 1M9 24L24 9M17 24l7-7" /></Grip>
                    </>
                  )}
                </ClassBox>
              ))}
            </Canvas>
            <Scroll>
              <ScrollPart $h={21}><Tri /></ScrollPart>
              <ScrollPart $h={352} $mt={429}><span /></ScrollPart>
              <ScrollPart $h={20} $mt={10}><Tri down /></ScrollPart>
            </Scroll>
          </CanvasFrame>
        </Center>
        <Gutter $w={5} />
        <Right>
          <NarrowTitle><span><u>B</u>ird's eye</span><DockButtons /></NarrowTitle>
          <BirdFrame><BirdView><MiniMap /></BirdView></BirdFrame>
        </Right>
      </Body>

      <Status>
        <StatusCell $w={319} $mr={712}><StatusText>Press Ctrl with left mouse click to delete a point</StatusText></StatusCell>
        <StatusCell $w={712} $mr={3}><Zoom>205%</Zoom><FitBox><span>Fit</span><i /><span>100%</span></FitBox></StatusCell>
        <StatusCell $w={33} $mr={3} $pad={7}><MagIcon /></StatusCell>
        <StatusCell $w={103} $mr={3}><Groove $w={36} /><Knob /><Groove $w={51} /></StatusCell>
        <StatusCell $w={34} $mr={0} $pad={7}><MagIcon plus /></StatusCell>
      </Status>

      <Taskbar>
        <Weather>
          <svg width="30" height="28" viewBox="0 0 30 28">
            <circle cx="21" cy="8" r="7.500" fill="#f39a1e" />
            <path d="M6 14a8 8 0 0 1 15-2 8 8 0 0 1 3 15H6a6.500 6.500 0 0 1 0-13z" fill="#b8cdf5" />
            <path d="M6 15c4-1 7 1 9 4 2-4 6-5 9-3 4 3 4 9 0 11H6a6 6 0 0 1 0-12z" fill="#d6e3fb" />
          </svg>
          <WeatherText>25°C<span>Mostly cloudy</span></WeatherText>
        </Weather>
        <svg width="29" height="29" viewBox="0 0 29 29">
          <defs><linearGradient id="wn" x1="0" y1="0" x2="1" y2="1"><stop offset="0" stopColor="#7ff0ff" /><stop offset="1" stopColor="#0e95ff" /></linearGradient></defs>
          <path d="M0 0h14v14H0zM15 0h14v14H15zM0 15h14v14H0zM15 15h14v14H15z" fill="url(#wn)" />
        </svg>
        <SearchPill>
          <svg width="18" height="18" viewBox="0 0 18 18" fill="none" stroke="#e4e6ea" strokeWidth="1.800"><circle cx="7.500" cy="7.500" r="6.300" /><path d="M12 12l5 5.500" /></svg>
          Search
        </SearchPill>
        <AppIcons />
        <Tray>
          <svg width="14" height="8" viewBox="0 0 14 8" fill="none" stroke="#fff" strokeWidth="1.800"><path d="M1 7l6-6 6 6" /></svg>
          <Lang>ENG<br />IN</Lang>
          <TrayIcons>
            <svg width="20" height="18" viewBox="0 0 20 18" fill="none" stroke="#fff" strokeWidth="1.500"><path d="M1 7c5-5.500 13-5.500 18 0M4 10c3.500-3.800 8.500-3.800 12 0M6.800 12.800c2-2 4.400-2 6.400 0" /><circle cx="10" cy="15" r="1.300" fill="#fff" /></svg>
            <svg width="20" height="18" viewBox="0 0 20 18" fill="none" stroke="#fff" strokeWidth="1.300"><path d="M1 6.500h3.500L9 2.500v13L4.500 11.500H1zM12.500 6l6 6M18.500 6l-6 6" /></svg>
            <svg width="21" height="18" viewBox="0 0 21 18" fill="none" stroke="#fff" strokeWidth="1.500"><path d="M8 3.500h7.500a2 2 0 0 1 2 2v7a2 2 0 0 1-2 2h-12a2 2 0 0 1-2-2V11" /><path d="M19.500 7.500v3.500" strokeWidth="2" /><path d="M8 6.500h5.500l-1.500 5H4.500z" fill="#fff" /><path d="M5 0L1 6h2.500L2 10l5-6H4.500z" fill="#fff" stroke="none" /></svg>
          </TrayIcons>
          <Clock>09:11<br />22-11-2023</Clock>
          <svg width="17" height="20" viewBox="0 0 17 20" fill="#efb8f2"><path d="M8.500.5c4 0 6 3 6 6.500v4l2 4.500H.5l2-4.500V7c0-3.500 2-6.500 6-6.500zM6 17h5c0 3-5 3-5 0z" /></svg>
        </Tray>
      </Taskbar>
    </Screen>
  );
}
